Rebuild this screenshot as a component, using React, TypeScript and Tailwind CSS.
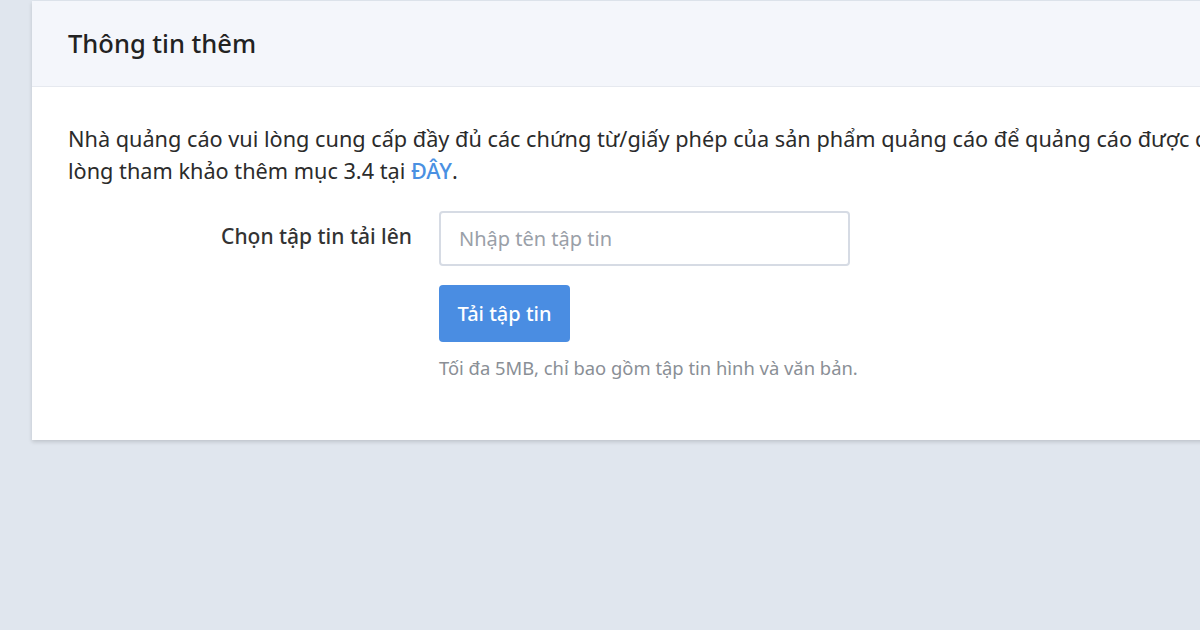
export default function App() {
  return (
    <div className="w-[1200px] h-[630px] overflow-hidden bg-[#e0e6ee] font-['Roboto',sans-serif]">
      <div className="ml-8 w-[1300px] mt-[1px] bg-white shadow-[0_2px_4px_rgba(0,0,0,0.15)]">
        <div className="h-[86px] bg-[#f4f6fb] border-b border-[#e6e9ef] flex items-center px-9">
          <h2 className="text-[25.5px] font-medium text-[#222]">Thông tin thêm</h2>
        </div>
        <div className="px-9 pt-[36px] pb-[58px]">
          <p className="text-[21.7px] leading-8 text-[#2b2b2b] whitespace-nowrap">
            Nhà quảng cáo vui lòng cung cấp đầy đủ các chứng từ/giấy phép của sản phẩm quảng cáo để quảng cáo được duyệt. Vui
            <br />
            lòng tham khảo thêm mục 3.4 tại <span className="font-medium text-[#4a90e2]">ĐÂY</span>.
          </p>
          <div className="flex mt-[24px]">
            <div className="w-[371px] pr-[27px] text-right pt-[10px] text-[21px] font-medium text-[#333]">Chọn tập tin tải lên</div>
            <div className="flex flex-col">
              <input
                placeholder="Nhập tên tập tin"
                className="w-[411px] h-[55px] rounded border-2 border-[#d6dbe4] px-[18px] text-[20px] placeholder:text-[#9aa0a8] outline-none"
              />
              <button className="mt-[19px] w-[131px] h-[57px] rounded bg-[#4a8de2] text-white text-[20px] font-medium">Tải tập tin</button>
              <p className="mt-[12px] text-[18.4px] text-[#8a8f96]">Tối đa 5MB, chỉ bao gồm tập tin hình và văn bản.</p>
            </div>
          </div>
        </div>
      </div>
    </div>
  );
}
